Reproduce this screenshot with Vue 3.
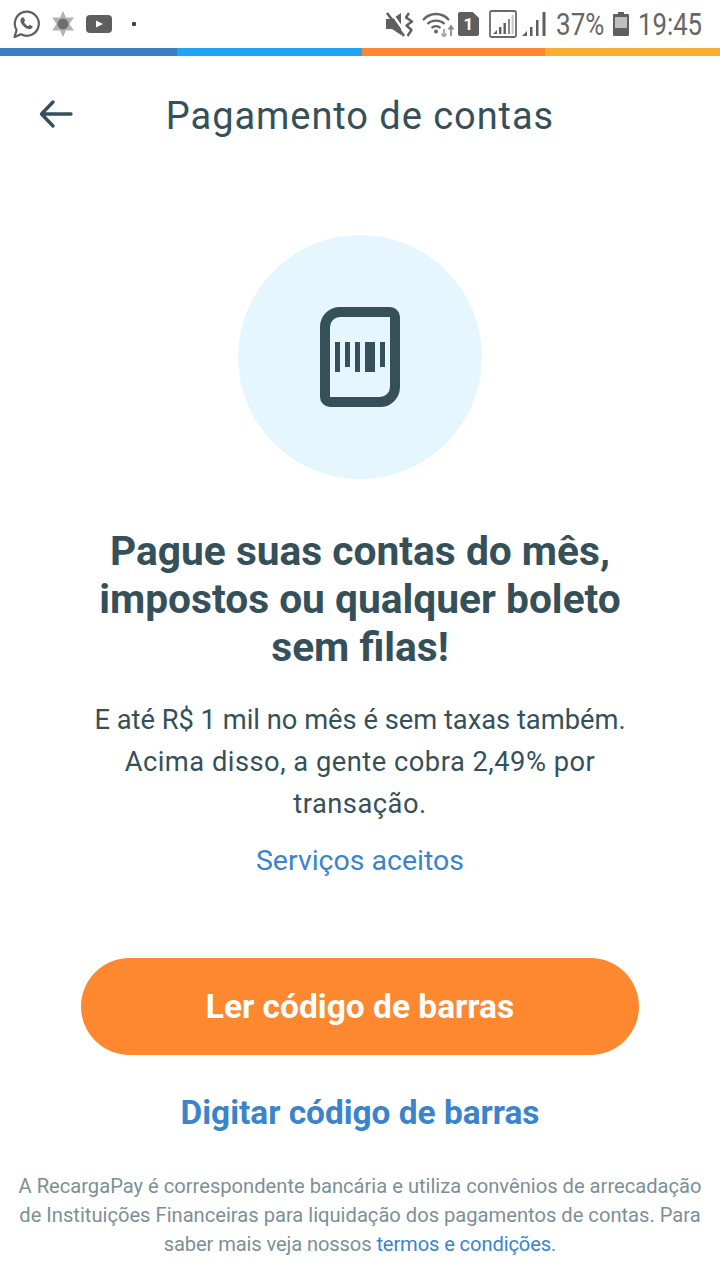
<template>
  <div class="page">
    <div class="status">
      <div class="left">
        <svg width="28" height="28" viewBox="0 0 28 28" class="wa">
          <path d="M2.5 27 L4.6 20 A12 12 0 1 1 9 24.2 Z" fill="none" stroke="#5f5f5f" stroke-width="2.2" stroke-linejoin="round"/>
          <path d="M9.5 8 C8 9.5 8 12 10.5 15 C13 18 16.5 20 19 18.8 C20.5 18 20.8 16.8 20.5 16.2 L17.6 14.8 L16.2 16.2 C14.5 15.6 12.6 13.6 12 12 L13.2 10.6 L11.8 7.6 C11 7.4 10.2 7.4 9.5 8 Z" fill="#5f5f5f"/>
        </svg>
        <svg width="24" height="26" viewBox="0 0 24 26" class="snow">
          <path d="M12 0 L15 6.5 L23 6.5 L18.5 13 L23 19.5 L15 19.5 L12 26 L9 19.5 L1 19.5 L5.5 13 L1 6.5 L9 6.5 Z" fill="#b4b4b4"/>
          <circle cx="12" cy="13" r="5.5" fill="#6f6f6f"/>
        </svg>
        <svg width="26" height="18" viewBox="0 0 26 18" class="yt">
          <rect width="26" height="18" rx="4" fill="#5f5f5f"/>
          <path d="M10 5.5 L17 9 L10 12.5 Z" fill="#fff"/>
        </svg>
        <span class="dot"></span>
      </div>
      <div class="right">
        <svg width="28" height="26" viewBox="0 0 28 26">
          <path d="M0 8 H6 L15 2 V24 L6 18 H0 Z" fill="#5f5f5f"/>
          <path d="M4 0 L21 24" stroke="#fff" stroke-width="2.4"/>
          <path d="M1 2 L18 25" stroke="#5f5f5f" stroke-width="2.6"/>
          <path d="M23 2 L20 6.5 L26 10.5 L20.5 14.5 L25.5 19 L21.5 25" fill="none" stroke="#5f5f5f" stroke-width="2.4" stroke-linejoin="round"/>
        </svg>
        <svg width="33" height="26" viewBox="0 0 33 26" class="wifi">
          <g fill="none" stroke="#646464" stroke-width="2.3">
            <path d="M1 9 C8 1 20 1 27 9"/>
            <path d="M5.5 13 C10 8.5 18 8.5 22.5 13"/>
            <path d="M9.5 17 C12 14.5 16 14.5 18.5 17"/>
          </g>
          <circle cx="14" cy="20.5" r="2" fill="#646464"/>
          <path d="M22 26 V18 M19.5 22.5 L22 26 L24.5 22.5" stroke="#a5a5a5" stroke-width="1.8" fill="none"/>
          <path d="M29 25 V15 M26.5 18.5 L29 15 L31.5 18.5" stroke="#8a8a8a" stroke-width="1.8" fill="none"/>
        </svg>
        <span class="sim">1</span>
        <svg width="28" height="28" viewBox="0 0 28 28" class="box">
          <rect x="1" y="1" width="26" height="26" rx="1.5" fill="none" stroke="#6a6a6a" stroke-width="1.8"/>
          <path d="M4 24 L8 20 V24 Z" fill="#5f5f5f"/>
          <path d="M10 24 V17 H12.4 V24 Z M14.5 24 V13 H16.9 V24 Z" fill="#5f5f5f"/>
          <path d="M19 24 V9 H21 V24 Z" fill="#8a8a8a"/>
          <path d="M22.6 24 V5 H24.6 V24 Z" fill="#c4c4c4"/>
        </svg>
        <svg width="25" height="26" viewBox="0 0 25 26" class="sig">
          <path d="M0 25 L5 20 V25 Z M8 25 V16 H10.5 V25 Z M14 25 V9 H16.5 V25 Z M20.5 25 V1 H23.5 V25 Z" fill="#5f5f5f"/>
        </svg>
        <span class="pct">37%</span>
        <svg width="16" height="24" viewBox="0 0 16 24" class="bat">
          <path d="M5 0 H11 V2 H15 Q16 2 16 3 V23 Q16 24 15 24 H1 Q0 24 0 23 V3 Q0 2 1 2 H5 Z" fill="#5f5f5f"/>
          <rect x="2" y="5" width="12" height="11" fill="#c0c0c0"/>
        </svg>
        <span class="clock">19:45</span>
      </div>
    </div>
    <div class="stripe">
      <span class="s1"></span><span class="s2"></span><span class="s3"></span><span class="s4"></span>
    </div>
    <header class="head">
      <svg class="back" width="34" height="30" viewBox="0 0 34 30">
        <path d="M32 15 H3 M14 3 L2.5 15 L14 27" fill="none" stroke="#36505a" stroke-width="3.4" stroke-linecap="round" stroke-linejoin="round"/>
      </svg>
      <h1>Pagamento de contas</h1>
    </header>
    <main class="main">
      <div class="circle">
        <svg width="80" height="100" viewBox="0 0 80 100">
          <path d="M20 5 H70 A5 5 0 0 1 75 10 V80 A15 15 0 0 1 60 95 H10 A5 5 0 0 1 5 90 V20 A15 15 0 0 1 20 5 Z" fill="none" stroke="#36505a" stroke-width="10" stroke-linejoin="round"/>
          <g fill="#36505a">
            <rect x="15" y="35" width="5" height="30"/>
            <rect x="25" y="35" width="5" height="25"/>
            <rect x="35" y="35" width="5" height="30"/>
            <rect x="45" y="35" width="10" height="30"/>
            <rect x="60" y="35" width="5" height="25"/>
          </g>
        </svg>
      </div>
      <h2>Pague suas contas do mês,<br>impostos ou qualquer boleto<br>sem filas!</h2>
      <p class="desc">E até R$ 1 mil no mês é sem taxas também.<br><span class="wide">Acima disso, a gente cobra 2,49% por<br>transação.</span></p>
      <a class="link">Serviços aceitos</a>
      <button class="cta">Ler código de barras</button>
      <a class="second">Digitar código de barras</a>
      <p class="foot">A RecargaPay é correspondente bancária e utiliza convênios de arrecadação<br>de Instituições Financeiras para liquidação dos pagamentos de contas. Para<br><span class="tight">saber mais veja nossos <span class="terms">termos e condições</span>.</span></p>
    </main>
  </div>
</template>

<script setup>
</script>

<style>
html, body { margin: 0; background: #fff; }
</style>

<style scoped>
.page { width: 720px; height: 1280px; overflow: hidden; background: #fff; font-family: Roboto, "Liberation Sans", sans-serif; color: #36505a; }
.status { height: 48px; display: flex; justify-content: space-between; align-items: center; padding: 0 16px 0 12px; box-sizing: border-box; }
.left, .right { display: flex; align-items: center; }
.left svg { display: block; }
.snow { margin-left: 11px; }
.yt { margin-left: 11px; }
.dot { width: 4px; height: 4px; margin-left: 20px; background: #444; border-radius: 1px; }
.right svg { display: block; }
.wifi { margin-left: 8px; }
.sim { width: 21px; height: 24px; margin-left: 3px; background: #5f5f5f; color: #fff; font-size: 17px; font-weight: 700; display: flex; align-items: center; justify-content: center; clip-path: polygon(0 0, 70% 0, 100% 25%, 100% 100%, 0 100%); border-radius: 2px; }
.box { margin-left: 10px; }
.sig { margin-left: 5px; }
.pct, .clock { display: block; font-size: 31px; color: #666; transform-origin: left center; white-space: nowrap; }
.pct { width: 48px; margin-left: 9px; transform: scaleX(0.84); }
.bat { margin-left: 9px; }
.clock { width: 66px; margin-left: 9px; transform: scaleX(0.83); }
.stripe { height: 8px; display: flex; }
.stripe span { display: block; }
.s1 { width: 177px; background: #3a7fc4; }
.s2 { width: 185px; background: #1ea5f5; }
.s3 { width: 183px; background: #fd8830; }
.s4 { flex: 1; background: #fbae2f; }
.head { height: 120px; display: flex; align-items: center; justify-content: center; position: relative; }
.back { position: absolute; left: 39px; top: 43px; }
h1 { margin: 0; font-size: 38px; font-weight: 400; color: #36505a; letter-spacing: 0.95px; }
.main { display: flex; flex-direction: column; align-items: center; text-align: center; padding-top: 59px; }
.circle { width: 244px; height: 244px; border-radius: 50%; background: #e6f6ff; display: flex; align-items: center; justify-content: center; }
h2 { margin: 48px 0 0; font-size: 40.7px; line-height: 48px; font-weight: 700; color: #36505a; }
.desc { margin: 28px 0 0; font-size: 27.3px; line-height: 42px; color: #36505a; }
.wide { letter-spacing: 0.5px; }
.link { margin-top: 15px; font-size: 28.5px; line-height: 42px; color: #3a84cc; }
.cta { margin-top: 76px; width: 558px; height: 97px; border: 0; border-radius: 49px; background: #fd8830; color: #fff; font: 700 33.5px Roboto, sans-serif; }
.second { margin-top: 38px; font-size: 33.4px; line-height: 40px; font-weight: 700; color: #3a84cc; }
.foot { margin: 39px 0 0; font-size: 20.15px; line-height: 29px; color: #7d8f96; white-space: nowrap; }
.tight { letter-spacing: -0.12px; }
.terms { color: #3a84cc; }
</style>
